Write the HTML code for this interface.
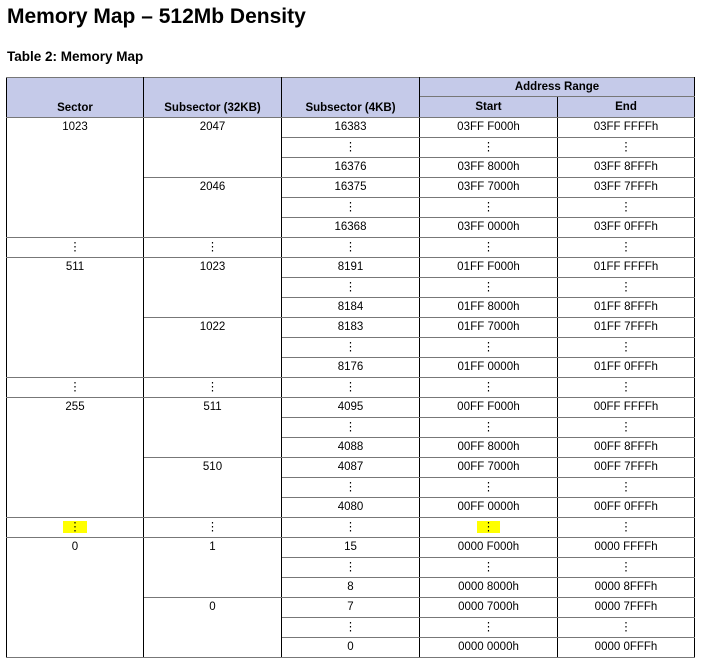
<!DOCTYPE html>
<html><head><meta charset="utf-8"><style>
body{margin:0;background:#fff;font-family:"Liberation Sans",sans-serif;color:#000;width:716px;height:671px;overflow:hidden;position:relative}
h1{position:absolute;left:7px;top:5px;margin:0;font-size:21px;font-weight:bold}
h2{position:absolute;left:7px;top:49px;margin:0;font-size:13.5px;font-weight:bold}
table{position:absolute;left:6px;top:77px;border-collapse:collapse;table-layout:fixed;font-size:11.5px}
td,th{border-left:1px solid #000;border-right:1px solid #000;border-top:1px solid #777;border-bottom:1px solid #777;text-align:center;vertical-align:top;height:19px;padding:0;line-height:19px}
th{background:#c5cae9;font-weight:bold;vertical-align:bottom;height:18px;line-height:18px}
tr.h2 th{height:20px;line-height:20px;vertical-align:top}
table{border:1px solid #777}
.y{background:#ffff00;padding:0 6px}
</style></head><body>
<h1>Memory Map – 512Mb Density</h1>
<h2>Table 2: Memory Map</h2>
<table>
<colgroup><col style="width:137px"><col style="width:138px"><col style="width:138px"><col style="width:138px"><col style="width:137px"></colgroup>
<tr><th rowspan="2">Sector</th><th rowspan="2">Subsector (32KB)</th><th rowspan="2">Subsector (4KB)</th><th colspan="2">Address Range</th></tr>
<tr class="h2"><th>Start</th><th>End</th></tr>

<tr><td rowspan="6">1023</td><td rowspan="3">2047</td><td>16383</td><td>03FF F000h</td><td>03FF FFFFh</td></tr>
<tr><td>⋮</td><td>⋮</td><td>⋮</td></tr>
<tr><td>16376</td><td>03FF 8000h</td><td>03FF 8FFFh</td></tr>
<tr><td rowspan="3">2046</td><td>16375</td><td>03FF 7000h</td><td>03FF 7FFFh</td></tr>
<tr><td>⋮</td><td>⋮</td><td>⋮</td></tr>
<tr><td>16368</td><td>03FF 0000h</td><td>03FF 0FFFh</td></tr>
<tr><td>⋮</td><td>⋮</td><td>⋮</td><td>⋮</td><td>⋮</td></tr>

<tr><td rowspan="6">511</td><td rowspan="3">1023</td><td>8191</td><td>01FF F000h</td><td>01FF FFFFh</td></tr>
<tr><td>⋮</td><td>⋮</td><td>⋮</td></tr>
<tr><td>8184</td><td>01FF 8000h</td><td>01FF 8FFFh</td></tr>
<tr><td rowspan="3">1022</td><td>8183</td><td>01FF 7000h</td><td>01FF 7FFFh</td></tr>
<tr><td>⋮</td><td>⋮</td><td>⋮</td></tr>
<tr><td>8176</td><td>01FF 0000h</td><td>01FF 0FFFh</td></tr>
<tr><td>⋮</td><td>⋮</td><td>⋮</td><td>⋮</td><td>⋮</td></tr>

<tr><td rowspan="6">255</td><td rowspan="3">511</td><td>4095</td><td>00FF F000h</td><td>00FF FFFFh</td></tr>
<tr><td>⋮</td><td>⋮</td><td>⋮</td></tr>
<tr><td>4088</td><td>00FF 8000h</td><td>00FF 8FFFh</td></tr>
<tr><td rowspan="3">510</td><td>4087</td><td>00FF 7000h</td><td>00FF 7FFFh</td></tr>
<tr><td>⋮</td><td>⋮</td><td>⋮</td></tr>
<tr><td>4080</td><td>00FF 0000h</td><td>00FF 0FFFh</td></tr>
<tr><td><span class="y">⋮</span></td><td>⋮</td><td>⋮</td><td><span class="y">⋮</span></td><td>⋮</td></tr>

<tr><td rowspan="6">0</td><td rowspan="3">1</td><td>15</td><td>0000 F000h</td><td>0000 FFFFh</td></tr>
<tr><td>⋮</td><td>⋮</td><td>⋮</td></tr>
<tr><td>8</td><td>0000 8000h</td><td>0000 8FFFh</td></tr>
<tr><td rowspan="3">0</td><td>7</td><td>0000 7000h</td><td>0000 7FFFh</td></tr>
<tr><td>⋮</td><td>⋮</td><td>⋮</td></tr>
<tr><td>0</td><td>0000 0000h</td><td>0000 0FFFh</td></tr>
</table>
</body></html>
